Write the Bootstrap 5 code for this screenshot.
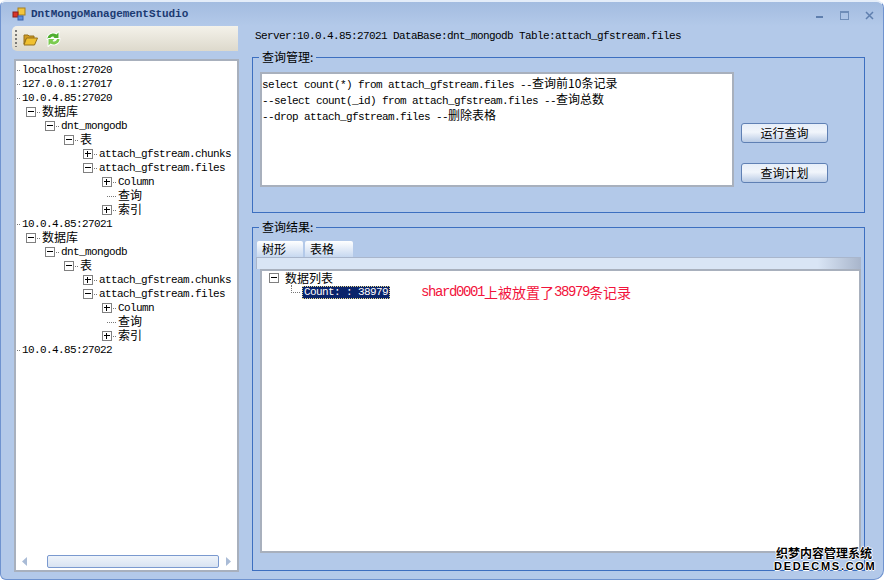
<!DOCTYPE html>
<html lang="zh">
<head>
<meta charset="utf-8">
<title>DntMongoManagementStudio</title>
<link href="https://cdn.jsdelivr.net/npm/bootstrap@5.3.0/dist/css/bootstrap.min.css" rel="stylesheet">
<style>
html,body{margin:0;width:884px;height:580px;overflow:hidden;background:#fff}
body{font-family:"Liberation Mono","Noto Sans CJK SC",monospace;font-size:11px;line-height:14px;letter-spacing:-.6px;color:#000}
.zh{font-family:"Noto Sans CJK SC",sans-serif;font-size:12px;letter-spacing:0}
.appwin{width:884px;height:580px;position:relative;background:#b3c9e9;border:1px solid #6f93cf;border-top:2px solid #e4edf9;border-radius:6px 8px 10px 6px;overflow:hidden}
.titlerow{height:24px;background:linear-gradient(#a3bce0,#b3c9e9);padding-left:11px;padding-right:9px;gap:5px}
.titletext{font-weight:700;letter-spacing:-.05px;color:#1b3a72}
.wctl{gap:16px;margin-left:auto;margin-top:2px}
.leftcol{width:238px;padding-left:11px;flex:none}
.toolstrip{height:25px;width:226px;background:linear-gradient(#f4f2ea,#ddd9cc);border-radius:5px 0 0 5px;padding-left:3px;gap:6px}
.grip{width:2px;height:17px;background:repeating-linear-gradient(#7b7b78 0 2px,transparent 2px 4px)}
.refreshico{margin-left:2px}
.treebox{width:225px;height:513px;margin-top:8px;margin-left:2px;background:#fff;border:2px solid #a8b0bd}
.treelist{padding-top:2px;flex:1;white-space:nowrap}
.node{height:14px;display:flex;align-items:center;position:relative}
.node .zh{display:block;height:14px;line-height:14px;margin-top:-2px;white-space:nowrap}
.lv0{padding-left:1px}.lv1{padding-left:10px}.lv2{padding-left:29px}.lv3{padding-left:48px}.lv4{padding-left:67px}.lv5{padding-left:86px}
.leafwide{width:9px;border-top:1px dotted #777;margin-left:5px;margin-right:2px;flex:none}
.exp{width:10px;height:10px;border:1px solid #808080;background:#fff;position:relative;flex:none;margin-right:1px}
.exp::before{content:"";position:absolute;left:1px;top:3px;width:6px;height:1px;background:#000}
.exp.plus::after{content:"";position:absolute;left:3px;top:1px;width:1px;height:6px;background:#000}
.tick{width:3px;border-top:1px dotted #777;margin-right:2px;flex:none}
.hscroll{height:18px;padding:0 6px}
.thumb{width:172px;height:13px;margin-left:19px;margin-right:6px;border:1px solid #7a99cf;border-radius:2px;background:linear-gradient(#eef3fa,#d8e3f2)}
.rightcol{width:613px;margin-left:13px;flex:none}
.srv{height:32px;padding:3px 0 0 3px;line-height:14px}
fieldset.grp{border:1px solid #3d6fc0;margin:0;padding:0;position:relative}
fieldset.grp legend{float:none;width:auto;margin:0 0 0 6px;padding:0 3px;font-size:12px;line-height:14px;letter-spacing:0;font-family:"Noto Sans CJK SC",sans-serif}
.grpone{height:163px;margin-top:-8px!important}
.grptwo{height:351px;margin-top:7px!important}
.grpbody{padding-top:8px}
.grptwo .grpbody{padding-top:7px}
.querybox{width:474px;height:115px;margin:0 0 0 7px;background:#fff;border:2px solid #a8b0bd;padding:1px 0 0 0;line-height:16px}
.qline{height:16px;white-space:nowrap}
.sidebtns{margin-left:7px;padding-top:51px;gap:20px}
.winbtn{width:87px;height:20px;padding:0;font-size:12px;line-height:16px;letter-spacing:0;font-family:"Noto Sans CJK SC",sans-serif;color:#000;border:1px solid #5f80b4;border-radius:3px;background:linear-gradient(#e6eef9,#f1f5fb 45%,#b9cbe5)}
.tabrow{margin:0 0 0 4px!important;border:0;gap:2px;height:16px;flex-wrap:nowrap}
.tabrow .nav-link{height:16px;padding:0 5px;border:0;border-radius:2px 2px 0 0;color:#000;font-size:12px;line-height:16px;letter-spacing:0;font-family:"Noto Sans CJK SC",sans-serif;background:linear-gradient(#fff,#c7d8f0);text-align:left}
.tabone{width:46px}.tabtwo{width:48px}
.tabband{margin-left:3px;width:605px;height:12px;border:1px solid #a9b6cc;border-bottom:0;background:linear-gradient(90deg,#d9e5f5 93%,#a9b6cc)}
.restree{margin-left:7px;width:601px;height:284px;background:#fff;border:2px solid #a8b0bd;padding:0 0 0 8px}
.resrow{height:14px;display:flex;align-items:center}
.resrow .zh{display:block;height:14px;line-height:14px}
.grow{margin-left:-1px}
.gtext{margin-left:5px;font-size:12px}
.selnode{background:#0a246a;color:#fff;outline:1px dotted #e9d98a;outline-offset:-1px;padding:0 2px;width:88px;height:13px;line-height:12px;white-space:pre}
.conn{width:9px;height:8px;border-left:1px dotted #777;border-bottom:1px dotted #777;margin:-6px 2px 0 21px;flex:none}
.redtext{color:#f2143c;margin-left:31px;white-space:nowrap;font-size:14px;letter-spacing:-1.4px;display:flex;align-items:center}
.redtext .zh{font-size:14px}
.stamp{position:absolute;right:9px;bottom:8px;width:100px;text-align:center;color:#000;font-weight:700;text-shadow:1px 0 0 #fff,-1px 0 0 #fff,0 1px 0 #fff,0 -1px 0 #fff;letter-spacing:0}
.stamp .zh{font-size:12px;font-weight:700;display:block;line-height:12px}
.stamp .lat{font-family:"Liberation Sans",sans-serif;font-size:11px;letter-spacing:1.7px;display:block;line-height:10px;margin-top:2px;white-space:nowrap}
</style>
</head>
<body>
<div class="appwin d-flex flex-column">
  <div class="titlerow d-flex align-items-center">
    <svg width="14" height="14" viewBox="0 0 14 14"><rect x="6" y="1" width="7" height="7" fill="#f2c53d" stroke="#a67f1c"/><rect x="1" y="5" width="5" height="5" fill="#d8352a" stroke="#8a1f18"/><rect x="6" y="9" width="5" height="4" fill="#5b8ee0" stroke="#3a63aa"/></svg>
    <span class="titletext">DntMongoManagementStudio</span>
    <div class="wctl d-flex align-items-center">
      <svg width="9" height="9" viewBox="0 0 9 9"><rect x="1" y="5" width="7" height="2" fill="#5f7fae"/></svg>
      <svg width="9" height="9" viewBox="0 0 9 9"><rect x=".5" y=".5" width="8" height="8" fill="none" stroke="#6f8db8"/><rect x="1" y="1" width="7" height="1" fill="#6f8db8"/></svg>
      <svg width="9" height="9" viewBox="0 0 9 9"><path d="M1 1l7 7M8 1l-7 7" stroke="#5f7fae" stroke-width="1.5"/></svg>
    </div>
  </div>
  <div class="d-flex flex-grow-1">
    <div class="leftcol d-flex flex-column">
      <div class="toolstrip d-flex align-items-center">
        <span class="grip"></span>
        <svg width="15" height="14" viewBox="0 0 15 14"><path d="M1 3h4l1 1h5v3H3L1 12z" fill="#d29c22" stroke="#94701c"/><path d="M3.500 6h11l-3 7H1z" fill="#f0c030" stroke="#94701c"/></svg>
        <svg class="refreshico" width="15" height="16" viewBox="0 0 15 16"><path d="M1.500 8C1.500 3.500 7 1 10.500 3.500L12.500 1.500V8H6.500L8.500 6C6.500 4.800 4.500 5.800 4 8Z" fill="#4fae2e" stroke="#fff" stroke-width="1.800" paint-order="stroke"/><path d="M13.500 8C13.500 12.500 8 15 4.500 12.500L2.500 14.500V8H8.500L6.500 10C8.500 11.200 10.500 10.200 11 8Z" fill="#7ccb50" stroke="#fff" stroke-width="1.800" paint-order="stroke"/></svg>
      </div>
      <div class="treebox d-flex flex-column">
        <div class="treelist">
          <div class="node lv0"><i class="tick"></i>localhost:27020</div>
          <div class="node lv0"><i class="tick"></i>127.0.0.1:27017</div>
          <div class="node lv0"><i class="tick"></i>10.0.4.85:27020</div>
          <div class="node lv1"><i class="exp"></i><i class="tick"></i><span class="zh">数据库</span></div>
          <div class="node lv2"><i class="exp"></i><i class="tick"></i>dnt_mongodb</div>
          <div class="node lv3"><i class="exp"></i><i class="tick"></i><span class="zh">表</span></div>
          <div class="node lv4"><i class="exp plus"></i><i class="tick"></i>attach_gfstream.chunks</div>
          <div class="node lv4"><i class="exp"></i><i class="tick"></i>attach_gfstream.files</div>
          <div class="node lv5"><i class="exp plus"></i><i class="tick"></i>Column</div>
          <div class="node lv5"><i class="leafwide"></i><span class="zh">查询</span></div>
          <div class="node lv5"><i class="exp plus"></i><i class="tick"></i><span class="zh">索引</span></div>
          <div class="node lv0"><i class="tick"></i>10.0.4.85:27021</div>
          <div class="node lv1"><i class="exp"></i><i class="tick"></i><span class="zh">数据库</span></div>
          <div class="node lv2"><i class="exp"></i><i class="tick"></i>dnt_mongodb</div>
          <div class="node lv3"><i class="exp"></i><i class="tick"></i><span class="zh">表</span></div>
          <div class="node lv4"><i class="exp plus"></i><i class="tick"></i>attach_gfstream.chunks</div>
          <div class="node lv4"><i class="exp"></i><i class="tick"></i>attach_gfstream.files</div>
          <div class="node lv5"><i class="exp plus"></i><i class="tick"></i>Column</div>
          <div class="node lv5"><i class="leafwide"></i><span class="zh">查询</span></div>
          <div class="node lv5"><i class="exp plus"></i><i class="tick"></i><span class="zh">索引</span></div>
          <div class="node lv0"><i class="tick"></i>10.0.4.85:27022</div>
        </div>
        <div class="hscroll d-flex align-items-center">
          <svg width="6" height="9" viewBox="0 0 6 9"><path d="M5 0v9L0 4.500z" fill="#a9bbd6"/></svg>
          <div class="thumb"></div>
          <svg width="6" height="9" viewBox="0 0 6 9"><path d="M1 0v9l5-4.500z" fill="#a9bbd6"/></svg>
        </div>
      </div>
    </div>
    <div class="rightcol d-flex flex-column">
      <div class="srv">Server:10.0.4.85:27021 DataBase:dnt_mongodb Table:attach_gfstream.files</div>
      <fieldset class="grp grpone">
        <legend>查询管理:</legend>
        <div class="grpbody d-flex">
          <div class="querybox">
            <div class="qline">select count(*) from attach_gfstream.files --<span class="zh">查询前10条记录</span></div>
            <div class="qline">--select count(_id) from attach_gfstream.files --<span class="zh">查询总数</span></div>
            <div class="qline">--drop attach_gfstream.files --<span class="zh">删除表格</span></div>
          </div>
          <div class="sidebtns d-flex flex-column">
            <button type="button" class="btn winbtn">运行查询</button>
            <button type="button" class="btn winbtn">查询计划</button>
          </div>
        </div>
      </fieldset>
      <fieldset class="grp grptwo">
        <legend>查询结果:</legend>
        <div class="grpbody">
          <ul class="nav nav-tabs tabrow">
            <li class="nav-item"><a class="nav-link tabone" href="#">树形</a></li>
            <li class="nav-item"><a class="nav-link tabtwo" href="#">表格</a></li>
          </ul>
          <div class="tabband"></div>
          <div class="restree">
            <div class="resrow grow"><i class="exp"></i><span class="zh gtext">数据列表</span></div>
            <div class="resrow">
              <i class="conn"></i><span class="selnode">Count: : 38979</span>
              <span class="redtext">shard0001<span class="zh">上被放置了</span>38979<span class="zh">条记录</span></span>
            </div>
          </div>
        </div>
      </fieldset>
    </div>
  </div>
  <div class="stamp"><span class="zh">织梦内容管理系统</span><span class="lat">DEDECMS.COM</span></div>
</div>
</body>
</html>
